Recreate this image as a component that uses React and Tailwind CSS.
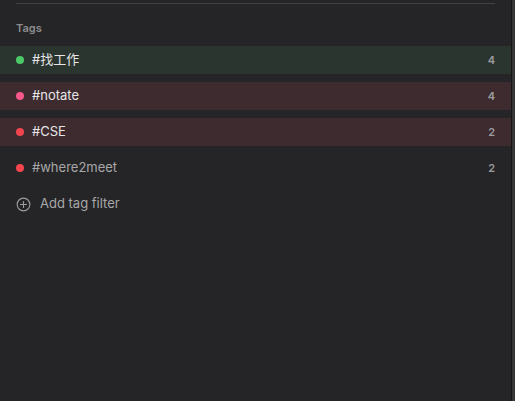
const tags = [
  { name: '#找工作', count: 4, dot: 'bg-[#4cc866]', row: 'bg-[#2b3530]', text: 'text-[#e6e6e6]' },
  { name: '#notate', count: 4, dot: 'bg-[#f5588a]', row: 'bg-[#3d2b30]', text: 'text-[#e6e6e6]' },
  { name: '#CSE', count: 2, dot: 'bg-[#f4454f]', row: 'bg-[#3d2b30]', text: 'text-[#e6e6e6]' },
  { name: '#where2meet', count: 2, dot: 'bg-[#f4454f]', row: '', text: 'text-[#a8a8a8]' },
];

const PlusCircle = () => (
  <svg width="15" height="15" viewBox="0 0 16 16" fill="none" stroke="#9a9a9a" strokeWidth="1.2">
    <circle cx="8" cy="8" r="6.8" />
    <path d="M8 4.8v6.4M4.8 8h6.4" strokeLinecap="round" />
  </svg>
);

export default function App() {
  return (
    <div
      className="flex h-[401px] w-[515px] bg-[#252527]"
      style={{ fontFamily: 'Inter, "Noto Sans CJK SC", sans-serif' }}
    >
      <div className="w-[512px] border-r border-[#171718]">
        <div className="mx-4 mt-[3px] h-px bg-[#424244]" />
        <div className="px-4 pt-[17px] pb-[11px] text-[11px] font-semibold leading-[14px] text-[#8c8c8e]">
          Tags
        </div>
        <div className="flex flex-col gap-2">
          {tags.map((t) => (
            <div key={t.name} className={`flex h-7 items-center px-4 ${t.row}`}>
              <span className={`h-2 w-2 rounded-full ${t.dot}`} />
              <span className={`ml-2 flex-1 text-[13px] ${t.text}`}>{t.name}</span>
              <span className="text-[11px] font-semibold text-[#9c9c9e]">{t.count}</span>
            </div>
          ))}
          <div className="flex h-7 items-center gap-[9px] px-4">
            <PlusCircle />
            <span className="text-[13px] text-[#a8a8a8]">Add tag filter</span>
          </div>
        </div>
      </div>
      <div className="flex-1 bg-[#363638]" />
    </div>
  );
}
